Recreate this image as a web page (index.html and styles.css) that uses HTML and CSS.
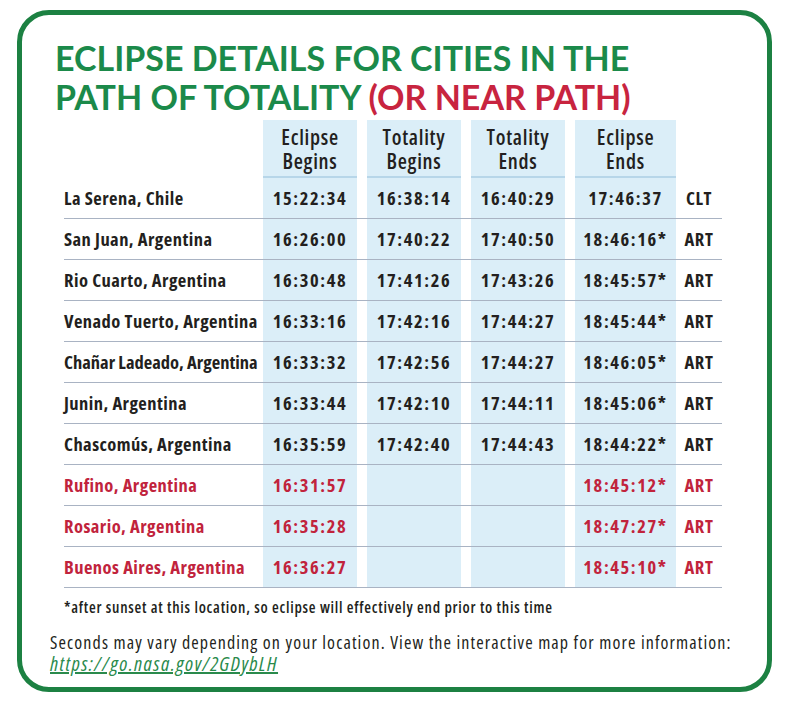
FILE: index.html
```html
<!DOCTYPE html>
<html>
<head>
<meta charset="utf-8">
<link rel="stylesheet" href="styles.css">
</head>
<body>
<div class="card">
  <h1 class="title">ECLIPSE DETAILS FOR CITIES IN THE<br>PATH OF TOTALITY <span class="red">(OR NEAR PATH)</span></h1>
  <div class="table">
    <div class="row head">
      <div class="name"></div>
      <div class="c">Eclipse<br>Begins</div>
      <div class="c g">Totality<br>Begins</div>
      <div class="c g">Totality<br>Ends</div>
      <div class="c g">Eclipse<br>Ends</div>
      <div class="z"></div>
    </div>
    <div class="row"><div class="name">La Serena, Chile</div><div class="c">15:22:34</div><div class="c g">16:38:14</div><div class="c g">16:40:29</div><div class="c g">17:46:37</div><div class="z">CLT</div></div>
    <div class="row"><div class="name">San Juan, Argentina</div><div class="c">16:26:00</div><div class="c g">17:40:22</div><div class="c g">17:40:50</div><div class="c g">18:46:16*</div><div class="z">ART</div></div>
    <div class="row"><div class="name">Rio Cuarto, Argentina</div><div class="c">16:30:48</div><div class="c g">17:41:26</div><div class="c g">17:43:26</div><div class="c g">18:45:57*</div><div class="z">ART</div></div>
    <div class="row"><div class="name">Venado Tuerto, Argentina</div><div class="c">16:33:16</div><div class="c g">17:42:16</div><div class="c g">17:44:27</div><div class="c g">18:45:44*</div><div class="z">ART</div></div>
    <div class="row"><div class="name tight">Chañar Ladeado, Argentina</div><div class="c">16:33:32</div><div class="c g">17:42:56</div><div class="c g">17:44:27</div><div class="c g">18:46:05*</div><div class="z">ART</div></div>
    <div class="row"><div class="name">Junin, Argentina</div><div class="c">16:33:44</div><div class="c g">17:42:10</div><div class="c g">17:44:11</div><div class="c g">18:45:06*</div><div class="z">ART</div></div>
    <div class="row"><div class="name">Chascomús, Argentina</div><div class="c">16:35:59</div><div class="c g">17:42:40</div><div class="c g">17:44:43</div><div class="c g">18:44:22*</div><div class="z">ART</div></div>
    <div class="row near"><div class="name">Rufino, Argentina</div><div class="c">16:31:57</div><div class="c g"></div><div class="c g"></div><div class="c g">18:45:12*</div><div class="z">ART</div></div>
    <div class="row near"><div class="name">Rosario, Argentina</div><div class="c">16:35:28</div><div class="c g"></div><div class="c g"></div><div class="c g">18:47:27*</div><div class="z">ART</div></div>
    <div class="row near"><div class="name">Buenos Aires, Argentina</div><div class="c">16:36:27</div><div class="c g"></div><div class="c g"></div><div class="c g">18:45:10*</div><div class="z">ART</div></div>
  </div>
  <p class="foot">*after sunset at this location, so eclipse will effectively end prior to this time</p>
  <p class="note">Seconds may vary depending on your location. View the interactive map for more information:<br><a class="link" href="#">https://go.nasa.gov/2GDybLH</a></p>
</div>
</body>
</html>
```

FILE: styles.css
```css
html, body { margin: 0; padding: 0; background: #fff; }
body { width: 790px; height: 708px; overflow: hidden; }
.card {
  margin: 10px 0 0 17px;
  width: 755px;
  height: 682px;
  box-sizing: border-box;
  border: 5px solid #1c8142;
  border-radius: 32px;
  padding: 23px 0 0 33px;
}
.title {
  margin: 0;
  font-family: Lato, "Liberation Sans", sans-serif;
  font-weight: 700;
  font-size: 34px;
  line-height: 39px;
  color: #1b8a4a;
}
.red { color: #c8243f; }
.table {
  margin: 4px 0 0 9px;
  width: 658px;
  font-family: "Open Sans", sans-serif;
  font-stretch: 75%;
  font-weight: 700;
  color: #231f20;
}
.row {
  display: grid;
  grid-template-columns: 199px 94px 104px 104px 111px 46px;
  box-sizing: border-box;
  height: 41px;
  padding-bottom: 0;
  border-bottom: 1px solid #a9b3c3;
  font-size: 18.5px;
}
.row > div { display: flex; align-items: center; padding-bottom: 2px; }
.row.head { height: 58px; border-bottom: none; font-size: 21px; line-height: 24px; font-weight: 600; letter-spacing: 0.7px; }
.row.head > div { padding-bottom: 0; }
.c { justify-content: center; text-align: center; background: #dbeef8; letter-spacing: 1.6px; }
.c.g { padding-left: 10px; background-clip: content-box; }
.row .c.g { padding-bottom: 2px; background: linear-gradient(#dbeef8, #dbeef8) 10px 0 / calc(100% - 10px) 100% no-repeat; }
.head .c { box-shadow: inset 0 -2px 0 #b7d6e9; letter-spacing: 0.7px; }
.row.head .c.g {
  box-shadow: none;
  background: linear-gradient(#b7d6e9, #b7d6e9) 10px 100% / calc(100% - 10px) 2px no-repeat,
              linear-gradient(#dbeef8, #dbeef8) 10px 0 / calc(100% - 10px) 100% no-repeat;
  padding-bottom: 0;
}
.z { justify-content: center; letter-spacing: 0.6px; }
.name { white-space: nowrap; letter-spacing: 0.45px; }
.name.tight { letter-spacing: 0; }
.near { color: #c1233c; }
.foot {
  margin: 8px 0 0 9px;
  font-family: "Open Sans", sans-serif;
  font-stretch: 75%;
  font-weight: 600;
  font-size: 15.5px;
  letter-spacing: 0.75px;
  color: #231f20;
}
.note {
  margin: 13px 0 0 -5px;
  font-family: "Open Sans", sans-serif;
  font-stretch: 75%;
  font-size: 18px;
  letter-spacing: 1.1px;
  line-height: 22px;
  color: #231f20;
}
.link { color: #2a8a4c; font-style: italic; font-size: 20px; letter-spacing: 1.4px; text-decoration: underline; }
```
